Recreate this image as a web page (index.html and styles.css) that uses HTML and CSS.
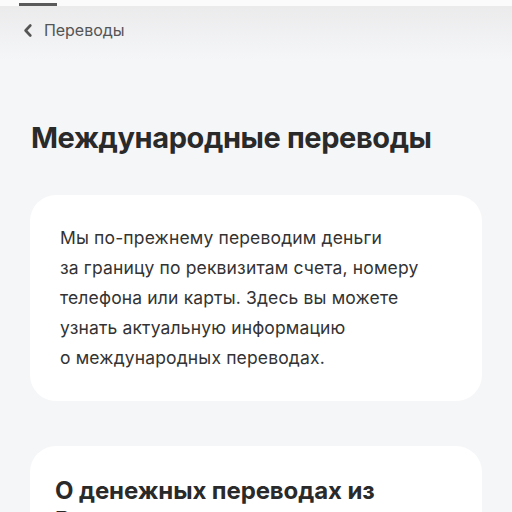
FILE: index.html
```html
<!DOCTYPE html>
<html lang="ru">
<head>
<meta charset="utf-8">
<link rel="stylesheet" href="styles.css">
</head>
<body>
<div class="topstrip"><div class="indicator"></div></div>
<header class="nav">
  <svg class="chev" width="8" height="13" viewBox="0 0 8 13"><path d="M6.3 1.5 L1.6 6.5 L6.3 11.5" fill="none" stroke="#555" stroke-width="2.6" stroke-linecap="round" stroke-linejoin="round"/></svg>
  <span class="nav-title">Переводы</span>
</header>
<main class="content">
  <h1 class="title">Международные переводы</h1>
  <section class="card">
    <p class="text">Мы по-прежнему переводим деньги<br>за границу по реквизитам счета, номеру<br>телефона или карты. Здесь вы можете<br>узнать актуальную информацию<br>о международных переводах.</p>
  </section>
  <section class="card card2">
    <h2 class="subtitle">О денежных переводах из России</h2>
  </section>
</main>
</body>
</html>
```
FILE: styles.css
```css
* { box-sizing: border-box; }
html, body { margin: 0; padding: 0; }
body {
  background: #f5f6f8;
  font-family: Inter, "Noto Sans", sans-serif;
  color: #2b2b2b;
  width: 512px;
  height: 512px;
  overflow: hidden;
}
.topstrip {
  height: 6px;
  background: #fbfbfb;
  padding-left: 19px;
  padding-top: 3px;
}
.indicator {
  width: 38px;
  height: 3px;
  background: #5a5a5a;
}
.nav {
  height: 54px;
  background: linear-gradient(#ebebec, #f5f6f8);
  display: flex;
  align-items: center;
  padding-left: 24px;
  padding-bottom: 6px;
  gap: 12px;
}
.chev { display: block; }
.nav-title {
  font-size: 16px;
  color: #555;
  letter-spacing: -0.05px;
}
.content {
  padding: 0 30px;
}
.title {
  margin: 60px 0 0 1px;
  font-size: 29px;
  font-weight: 700;
  line-height: 36px;
  letter-spacing: -0.4px;
  color: #2a2a2a;
}
.card {
  background: #fff;
  border-radius: 26px;
  margin-top: 39px;
  padding: 28px 30px;
}
.text {
  margin: 0;
  font-size: 17.5px;
  line-height: 30px;
  color: #333;
  letter-spacing: 0.15px;
}
.card2 {
  margin-top: 45px;
  padding: 30px 25px;
}
.subtitle {
  margin: 0;
  font-size: 24px;
  font-weight: 700;
  line-height: 30px;
  color: #2a2a2a;
  letter-spacing: -0.1px;
  width: 330px;
}
```
